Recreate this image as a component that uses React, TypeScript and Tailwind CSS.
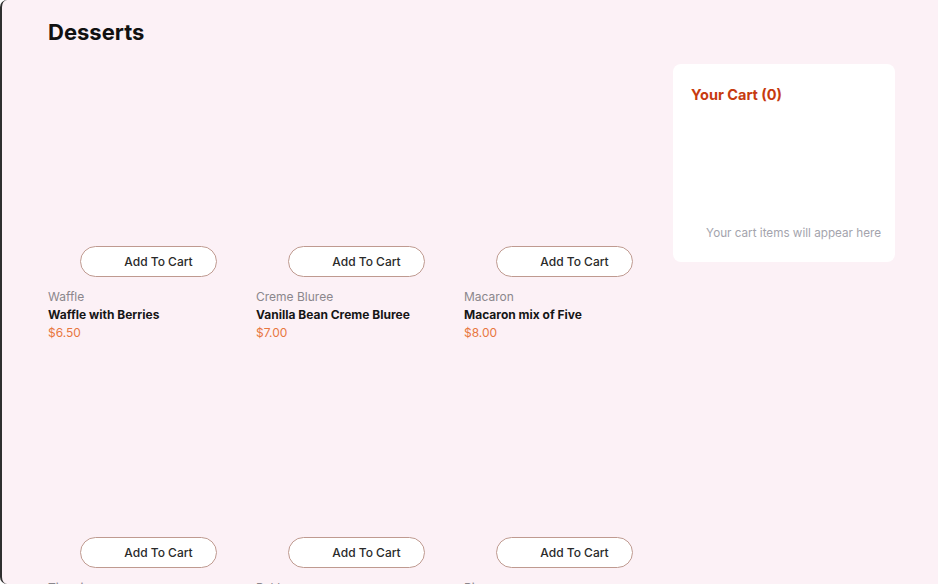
import React from "react";

type Product = { category: string; name: string; price: string };

const products: Product[] = [
  { category: "Waffle", name: "Waffle with Berries", price: "$6.50" },
  { category: "Creme Bluree", name: "Vanilla Bean Creme Bluree", price: "$7.00" },
  { category: "Macaron", name: "Macaron mix of Five", price: "$8.00" },
  { category: "Tiramisu", name: "Classic Tiramisu", price: "$5.50" },
  { category: "Baklava", name: "Pistachio Baklava", price: "$4.00" },
  { category: "Pie", name: "Lemon Meringue Pie", price: "$5.00" },
];

function ProductCard({ product }: { product: Product }) {
  return (
    <div className="flex w-[200px] flex-col">
      {/* image area (picture failed to load, left blank) */}
      <div className="h-[190px] w-full rounded-lg" />
      <button className="mx-auto -mt-[15px] flex h-[31px] w-[137px] items-center justify-center gap-2 rounded-full border border-[#bf9a90] bg-white text-[12px] font-medium text-[#2a2a2a]">
        <span className="w-[13px]" />
        Add To Cart
      </button>
      <div className="mt-[11px] flex flex-col text-[12px] leading-[18px]">
        <span className="text-[#8b878c]">{product.category}</span>
        <span className="font-bold text-[#161616]">{product.name}</span>
        <span className="text-[#e8773f]">{product.price}</span>
      </div>
    </div>
  );
}

export default function App() {
  return (
    <div
      className="h-[584px] overflow-hidden rounded-l-[7px] border-l-2 border-[#2f2f2f] bg-[#fcf1f6]"
      style={{ fontFamily: "Inter, 'Noto Sans', sans-serif" }}
    >
      <div className="flex pl-[46px] pt-4">
        {/* Products */}
        <main className="w-[616px]">
          <h1 className="text-[22px] font-bold leading-8 text-[#111]">Desserts</h1>
          <div className="mt-[23px] grid grid-cols-[200px_200px_200px] gap-x-2 gap-y-5">
            {products.map((p) => (
              <ProductCard key={p.name} product={p} />
            ))}
          </div>
        </main>

        {/* Cart */}
        <aside className="ml-[9px] mt-12 flex h-[198px] w-[222px] flex-col rounded-lg bg-white">
          <h2 className="pl-[18px] pt-[20px] text-[14.5px] font-bold text-[#c73b0f]">Your Cart (0)</h2>
          <p className="mt-auto pb-[19px] pr-[14px] text-right text-[11.7px] text-[#a4a4ad]">
            Your cart items will appear here
          </p>
        </aside>
      </div>
    </div>
  );
}
